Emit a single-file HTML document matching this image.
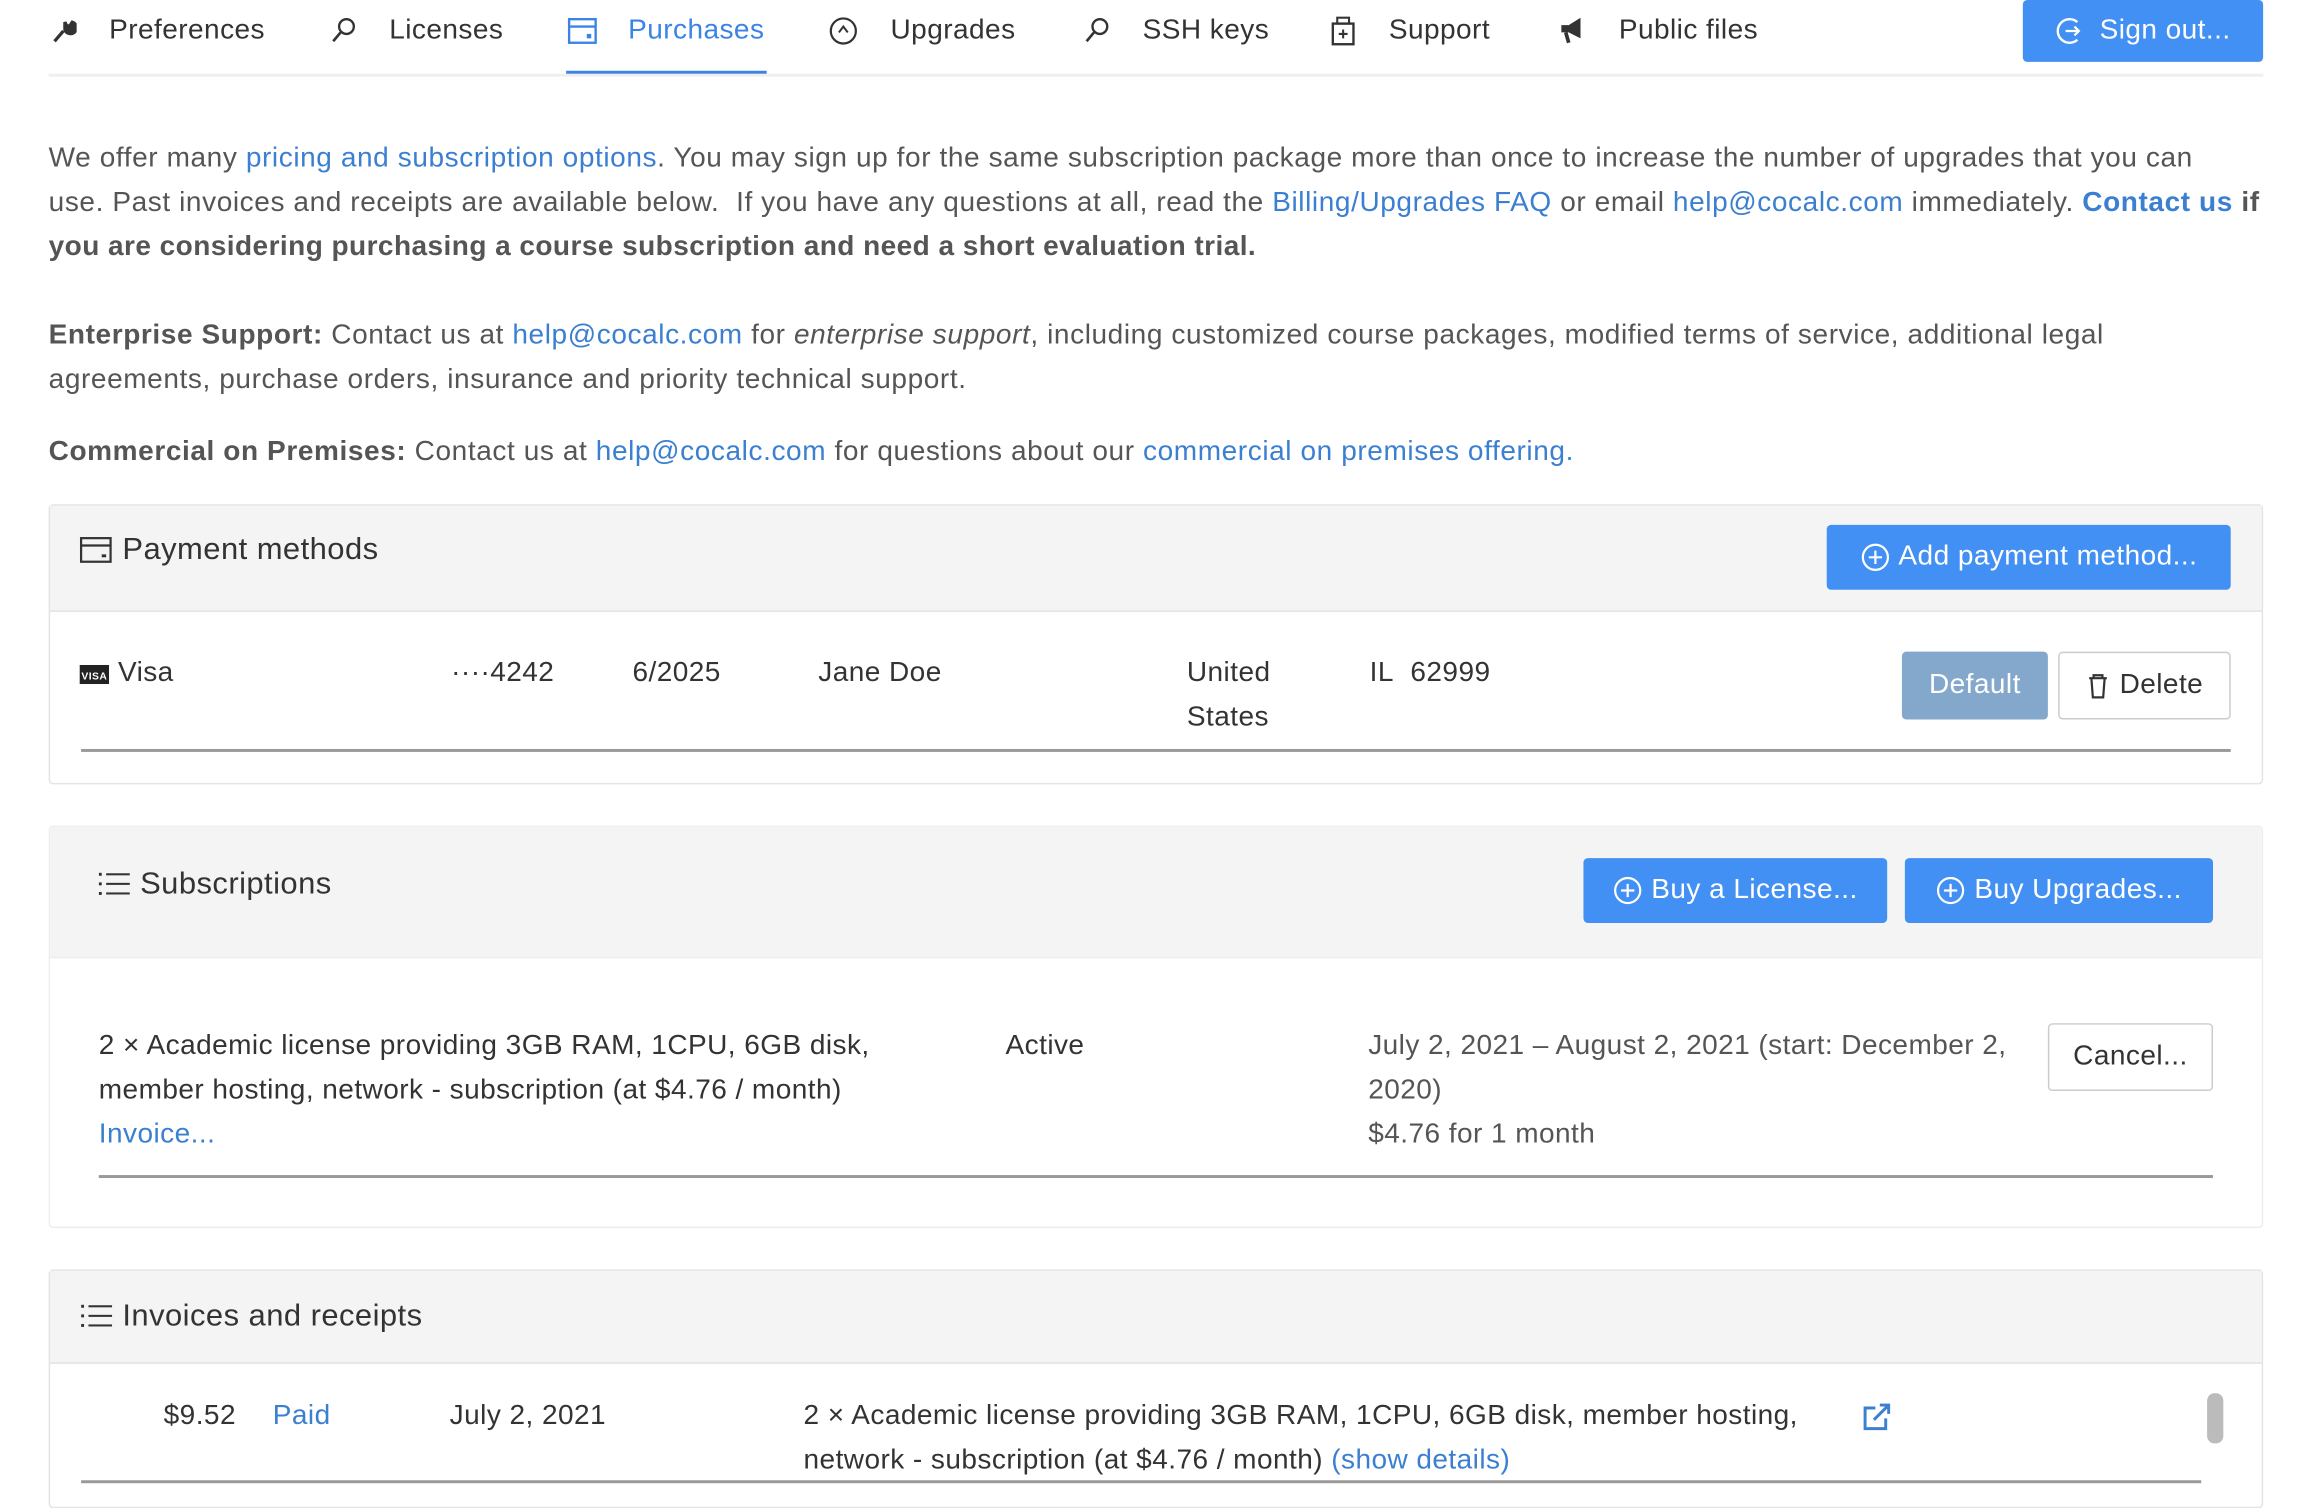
<!DOCTYPE html>
<html><head><meta charset="utf-8">
<style>
html,body{margin:0;padding:0;width:2300px;height:1484px;overflow:hidden;background:#fff}
.w{position:absolute;left:0;top:0;width:1560px;height:1007px;transform:scale(1.474359);transform-origin:0 0;font-family:"Liberation Sans",sans-serif;font-size:19px;color:#333;letter-spacing:0.3px}
.a{position:absolute;white-space:nowrap;line-height:30px}
.nav{color:#333;font-size:19px}
.blue{color:#3b7fd1}
.g{color:#555;letter-spacing:0.4px}
.btn{position:absolute;background:#4290f3;color:#fff;border-radius:3px;display:flex;align-items:center;justify-content:center;font-size:19px;white-space:nowrap}
.panel{position:absolute;left:33px;width:1500px;border:1px solid #e3e3e3;border-radius:3px;background:#fff}
.ph{position:absolute;left:0;right:0;top:0;background:#f4f4f4;border-bottom:1px solid #e3e3e3}
.hr{position:absolute;height:2px;background:#999}
svg{position:absolute}
</style></head><body><div class="w">
<!-- nav -->
<svg style="left:34px;top:12px" width="18" height="18" viewBox="0 0 18 18"><path d="M3 16 L9 9 M10 8 a4 4 0 1 0 5 -5 l-2 3 -2 -1 -1 -2 z" stroke="#333" stroke-width="2.2" fill="#333"/></svg>
<div class="a nav" style="left:74px;top:6px">Preferences</div>
<svg style="left:224px;top:11px" width="18" height="20" viewBox="0 0 18 20"><circle cx="11" cy="7" r="5" stroke="#333" stroke-width="1.6" fill="none"/><path d="M7 11 L2 17" stroke="#333" stroke-width="1.8"/></svg>
<div class="a nav" style="left:264px;top:6px">Licenses</div>
<svg style="left:385px;top:12px" width="20" height="18" viewBox="0 0 20 18"><rect x="1" y="1" width="18" height="16" stroke="#3b84e6" stroke-width="1.6" fill="none"/><path d="M1 6 H19" stroke="#3b84e6" stroke-width="1.6"/><rect x="13" y="11" width="3" height="3" fill="#3b84e6"/></svg>
<div class="a nav" style="left:426px;top:6px;color:#3b84e6">Purchases</div>
<div style="position:absolute;left:384px;top:48px;width:136px;height:3px;background:#3b84e6"></div>
<svg style="left:562px;top:11px" width="20" height="20" viewBox="0 0 20 20"><circle cx="10" cy="10" r="8.5" stroke="#333" stroke-width="1.5" fill="none"/><path d="M7 11 L10 7 L13 11" stroke="#333" stroke-width="1.4" fill="none"/></svg>
<div class="a nav" style="left:604px;top:6px">Upgrades</div>
<svg style="left:735px;top:11px" width="18" height="20" viewBox="0 0 18 20"><circle cx="11" cy="7" r="5" stroke="#333" stroke-width="1.6" fill="none"/><path d="M7 11 L2 17" stroke="#333" stroke-width="1.8"/></svg>
<div class="a nav" style="left:775px;top:6px">SSH keys</div>
<svg style="left:902px;top:10px" width="18" height="22" viewBox="0 0 18 22"><rect x="2" y="6" width="14" height="14" stroke="#333" stroke-width="1.6" fill="none"/><rect x="5" y="2" width="8" height="4" stroke="#333" stroke-width="1.4" fill="none"/><path d="M9 10 V16 M6 13 H12" stroke="#333" stroke-width="1.4"/></svg>
<div class="a nav" style="left:942px;top:6px">Support</div>
<svg style="left:1057px;top:10px" width="20" height="20" viewBox="0 0 20 20"><path d="M2 7 H7 L15 2 V16 L7 12 H2 Z" fill="#333"/><path d="M5 12 L7 19" stroke="#333" stroke-width="2.5"/></svg>
<div class="a nav" style="left:1098px;top:6px">Public files</div>
<div class="btn" style="left:1372px;top:0;width:163px;height:42px"><svg style="position:static;margin-right:10px" width="20" height="20" viewBox="0 0 20 20"><path d="M15 4 A8 8 0 1 0 15 16" stroke="#fff" stroke-width="1.6" fill="none"/><path d="M7 10 H16 M13 7 L16 10 L13 13" stroke="#fff" stroke-width="1.5" fill="none"/></svg>Sign out...</div>
<div style="position:absolute;left:33px;top:50px;width:1502px;height:2px;background:#efefef"></div>

<!-- intro -->
<div class="a g" style="left:33px;top:93px">We offer many <span class="blue">pricing and subscription options</span>. You may sign up for the same subscription package more than once to increase the number of upgrades that you can</div>
<div class="a g" style="left:33px;top:123px">use. Past invoices and receipts are available below.&nbsp; If you have any questions at all, read the <span class="blue">Billing/Upgrades FAQ</span> or email <span class="blue">help@cocalc.com</span> immediately. <b class="blue">Contact us</b> <b>if</b></div>
<div class="a g" style="left:33px;top:153px;font-weight:bold;letter-spacing:0.3px">you are considering purchasing a course subscription and need a short evaluation trial.</div>
<div class="a g" style="left:33px;top:213px"><b>Enterprise Support:</b> Contact us at <span class="blue">help@cocalc.com</span> for <i>enterprise support</i>, including customized course packages, modified terms of service, additional legal</div>
<div class="a g" style="left:33px;top:243px">agreements, purchase orders, insurance and priority technical support.</div>
<div class="a g" style="left:33px;top:292px"><b>Commercial on Premises:</b> Contact us at <span class="blue">help@cocalc.com</span> for questions about our <span class="blue">commercial on premises offering.</span></div>

<!-- payment methods -->
<div class="panel" style="top:342px;height:188px">
 <div class="ph" style="height:71px"></div>
</div>
<svg style="left:54px;top:364px" width="22" height="18" viewBox="0 0 22 18"><rect x="1" y="1" width="20" height="16" stroke="#333" stroke-width="1.5" fill="none"/><path d="M1 6 H21" stroke="#333" stroke-width="1.5"/><rect x="15" y="12" width="3" height="2" fill="#333"/></svg>
<div class="a" style="left:83px;top:358px;font-size:21px;color:#333">Payment methods</div>
<div class="btn" style="left:1239px;top:356px;width:274px;height:44px"><svg style="position:static;margin-right:6px" width="20" height="20" viewBox="0 0 20 20"><circle cx="10" cy="10" r="8.5" stroke="#fff" stroke-width="1.5" fill="none"/><path d="M10 5.5 V14.5 M5.5 10 H14.5" stroke="#fff" stroke-width="1.5"/></svg>Add payment method...</div>
<svg style="left:54px;top:451px" width="20" height="13" viewBox="0 0 20 13"><rect width="20" height="13" fill="#222"/><text x="10" y="10" font-size="7" font-family="Liberation Sans" font-weight="bold" fill="#fff" text-anchor="middle">VISA</text></svg>
<div class="a" style="left:80px;top:442px">Visa</div>
<div class="a" style="left:306px;top:442px">····4242</div>
<div class="a" style="left:429px;top:442px">6/2025</div>
<div class="a" style="left:555px;top:442px">Jane Doe</div>
<div class="a" style="left:805px;top:442px">United<br>States</div>
<div class="a" style="left:929px;top:442px">IL&nbsp; 62999</div>
<div class="btn" style="left:1290px;top:442px;width:99px;height:46px;background:#84a8cc">Default</div>
<div class="btn" style="left:1396px;top:442px;width:115px;height:44px;background:#fff;color:#333;border:1px solid #ccc"><svg style="position:static;margin-right:7px" width="16" height="18" viewBox="0 0 16 18"><path d="M2 4 H14 M5 4 V2 H11 V4 M3.5 4 L4.5 17 H11.5 L12.5 4" stroke="#333" stroke-width="1.5" fill="none"/></svg>Delete</div>
<div class="hr" style="left:55px;top:508px;width:1458px"></div>

<!-- subscriptions -->
<div class="panel" style="top:560px;height:271px;border-color:#eee">
 <div class="ph" style="height:88px;border-bottom-color:#eee"></div>
</div>
<svg style="left:67px;top:591px" width="22" height="17" viewBox="0 0 22 17"><g fill="#333"><rect x="0" y="1" width="2" height="2"/><rect x="0" y="7.5" width="2" height="2"/><rect x="0" y="14" width="2" height="2"/><rect x="5" y="1.3" width="16" height="1.4"/><rect x="5" y="7.8" width="16" height="1.4"/><rect x="5" y="14.3" width="16" height="1.4"/></g></svg>
<div class="a" style="left:95px;top:585px;font-size:21px">Subscriptions</div>
<div class="btn" style="left:1074px;top:582px;width:206px;height:44px"><svg style="position:static;margin-right:6px" width="20" height="20" viewBox="0 0 20 20"><circle cx="10" cy="10" r="8.5" stroke="#fff" stroke-width="1.5" fill="none"/><path d="M10 5.5 V14.5 M5.5 10 H14.5" stroke="#fff" stroke-width="1.5"/></svg>Buy a License...</div>
<div class="btn" style="left:1292px;top:582px;width:209px;height:44px"><svg style="position:static;margin-right:6px" width="20" height="20" viewBox="0 0 20 20"><circle cx="10" cy="10" r="8.5" stroke="#fff" stroke-width="1.5" fill="none"/><path d="M10 5.5 V14.5 M5.5 10 H14.5" stroke="#fff" stroke-width="1.5"/></svg>Buy Upgrades...</div>
<div class="a" style="left:67px;top:695px">2 × Academic license providing 3GB RAM, 1CPU, 6GB disk,<br>member hosting, network - subscription (at $4.76 / month)<br><span class="blue">Invoice...</span></div>
<div class="a" style="left:682px;top:695px">Active</div>
<div class="a g" style="left:928px;top:695px;letter-spacing:0.3px">July 2, 2021 – August 2, 2021 (start: December 2,<br>2020)<br>$4.76 for 1 month</div>
<div class="btn" style="left:1389px;top:694px;width:110px;height:44px;background:#fff;color:#333;border:1px solid #ccc">Cancel...</div>
<div class="hr" style="left:67px;top:797px;width:1434px;height:1.5px"></div>

<!-- invoices -->
<div class="panel" style="top:861px;height:160px">
 <div class="ph" style="height:62px"></div>
</div>
<svg style="left:55px;top:884px" width="22" height="17" viewBox="0 0 22 17"><g fill="#333"><rect x="0" y="1" width="2" height="2"/><rect x="0" y="7.5" width="2" height="2"/><rect x="0" y="14" width="2" height="2"/><rect x="5" y="1.3" width="16" height="1.4"/><rect x="5" y="7.8" width="16" height="1.4"/><rect x="5" y="14.3" width="16" height="1.4"/></g></svg>
<div class="a" style="left:83px;top:878px;font-size:21px">Invoices and receipts</div>
<div class="a" style="left:111px;top:946px">$9.52</div>
<div class="a blue" style="left:185px;top:946px">Paid</div>
<div class="a" style="left:305px;top:946px">July 2, 2021</div>
<div class="a" style="left:545px;top:946px">2 × Academic license providing 3GB RAM, 1CPU, 6GB disk, member hosting,<br>network - subscription (at $4.76 / month) <span class="blue">(show details)</span></div>
<svg style="left:1263px;top:951px" width="20" height="20" viewBox="0 0 20 20"><path d="M9 4 H2 V18 H16 V11" stroke="#3b7fd1" stroke-width="2" fill="none"/><path d="M8 12 L18 2 M12 2 H18 V8" stroke="#3b7fd1" stroke-width="2" fill="none"/></svg>
<div style="position:absolute;left:1497px;top:945px;width:11px;height:34px;border-radius:5px;background:#bbb"></div>
<div class="hr" style="left:55px;top:1004px;width:1438px"></div>
</div></body></html>
